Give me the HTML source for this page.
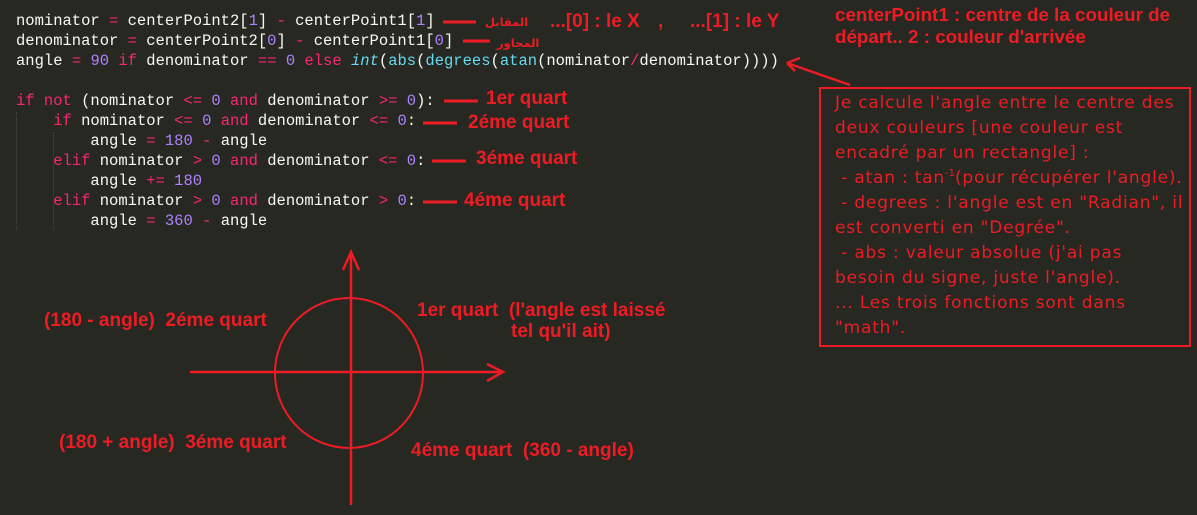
<!DOCTYPE html>
<html><head><meta charset="utf-8"><style>
body{margin:0;width:1197px;height:515px;background:#272822;position:relative;overflow:hidden}
.code{position:absolute;left:16px;top:11px;font-family:"Liberation Mono",monospace;font-size:15.5px;line-height:20px;color:#f8f8f2;white-space:pre}
.k{color:#f92672}.n{color:#ae81ff}.f{color:#66d9ef}.i{color:#66d9ef;font-style:italic}
.r{position:absolute;color:#ed1c24;font-family:"Liberation Sans Narrow","Liberation Sans",sans-serif;font-weight:bold;font-size:19px;white-space:nowrap;line-height:20px}
.ar{font-family:"DejaVu Sans",sans-serif;font-size:11.5px}
.box{position:absolute;left:819px;top:87px;width:368px;height:256px;border:2px solid #ed1c24;box-sizing:content-box}
.bt{position:absolute;left:835px;top:91px;color:#ed1c24;font-family:"DejaVu Sans",sans-serif;font-size:17px;letter-spacing:0.8px;line-height:25px;white-space:pre}
.bt sup{font-size:10px;line-height:0;vertical-align:7px;letter-spacing:0}
.hd{position:absolute;left:835px;top:4px;color:#ed1c24;font-family:"Liberation Sans",sans-serif;font-weight:bold;font-size:18.8px;line-height:22px;white-space:nowrap}
.g{position:absolute;border-left:1px dotted #464741}
</style></head><body>
<div class="code">nominator <span class="k">=</span> centerPoint2[<span class="n">1</span>] <span class="k">-</span> centerPoint1[<span class="n">1</span>]
denominator <span class="k">=</span> centerPoint2[<span class="n">0</span>] <span class="k">-</span> centerPoint1[<span class="n">0</span>]
angle <span class="k">=</span> <span class="n">90</span> <span class="k">if</span> denominator <span class="k">==</span> <span class="n">0</span> <span class="k">else</span> <span class="i">int</span>(<span class="f">abs</span>(<span class="f">degrees</span>(<span class="f">atan</span>(nominator<span class="k">/</span>denominator))))

<span class="k">if</span> <span class="k">not</span> (nominator <span class="k">&lt;=</span> <span class="n">0</span> <span class="k">and</span> denominator <span class="k">&gt;=</span> <span class="n">0</span>):
    <span class="k">if</span> nominator <span class="k">&lt;=</span> <span class="n">0</span> <span class="k">and</span> denominator <span class="k">&lt;=</span> <span class="n">0</span>:
        angle <span class="k">=</span> <span class="n">180</span> <span class="k">-</span> angle
    <span class="k">elif</span> nominator <span class="k">&gt;</span> <span class="n">0</span> <span class="k">and</span> denominator <span class="k">&lt;=</span> <span class="n">0</span>:
        angle <span class="k">+=</span> <span class="n">180</span>
    <span class="k">elif</span> nominator <span class="k">&gt;</span> <span class="n">0</span> <span class="k">and</span> denominator <span class="k">&gt;</span> <span class="n">0</span>:
        angle <span class="k">=</span> <span class="n">360</span> <span class="k">-</span> angle</div>
<div class="g" style="left:16px;top:112px;height:118px"></div>
<div class="g" style="left:53px;top:132px;height:98px"></div>
<svg width="1197" height="515" style="position:absolute;left:0;top:0" fill="none" stroke="#ed1c24" stroke-width="3">
<line x1="443" y1="22" x2="476" y2="22"/>
<line x1="463" y1="41" x2="490" y2="41"/>
<line x1="444" y1="101" x2="478" y2="101"/>
<line x1="423" y1="123" x2="457" y2="123"/>
<line x1="432" y1="161" x2="466" y2="161"/>
<line x1="423" y1="202" x2="457" y2="202"/>
<path d="M850 85 L787 63 M787 63 L800 58 M787 63 L795 71" stroke-width="2.5"/>
<line x1="351" y1="252" x2="351" y2="505" stroke-width="2.5"/>
<path d="M343 270 L351 252 L359 270" stroke-width="2.5"/>
<line x1="190" y1="372" x2="503" y2="372" stroke-width="2.5"/>
<path d="M487 364 L503 372 L487 381" stroke-width="2.5"/>
<ellipse cx="349" cy="373" rx="74" ry="75" stroke-width="2"/>
</svg>
<div class="r ar" style="left:485px;top:12px">المقابل</div>
<div class="r ar" style="left:497px;top:33px">المجاور</div>
<div class="r" style="left:550px;top:12px">...[0] : le X</div>
<div class="r" style="left:658px;top:12px">,</div>
<div class="r" style="left:690px;top:12px">...[1] : le Y</div>
<div class="r" style="left:486px;top:89px">1er quart</div>
<div class="r" style="left:468px;top:113px">2éme quart</div>
<div class="r" style="left:476px;top:149px">3éme quart</div>
<div class="r" style="left:464px;top:191px">4éme quart</div>
<div class="hd">centerPoint1 : centre de la couleur de<br>départ.. 2 : couleur d'arrivée</div>
<div class="box"></div>
<div class="bt">Je calcule l'angle entre le centre des
deux couleurs [une couleur est
encadré par un rectangle] :
 - atan : tan<sup>-1</sup>(pour récupérer l'angle).
 - degrees : l'angle est en "Radian", il
est converti en "Degrée".
 - abs : valeur absolue (j'ai pas
besoin du signe, juste l'angle).
... Les trois fonctions sont dans
"math".</div>
<div class="r" style="left:44px;top:311px">(180 - angle)&nbsp; 2éme quart</div>
<div class="r" style="left:417px;top:301px">1er quart&nbsp; (l'angle est laissé</div>
<div class="r" style="left:511px;top:322px">tel qu'il ait)</div>
<div class="r" style="left:59px;top:433px">(180 + angle)&nbsp; 3éme quart</div>
<div class="r" style="left:411px;top:441px">4éme quart&nbsp; (360 - angle)</div>
</body></html>
